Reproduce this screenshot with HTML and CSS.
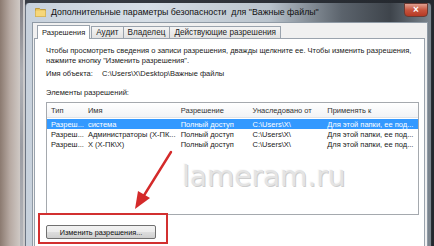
FILE: index.html
```html
<!DOCTYPE html>
<html>
<head>
<meta charset="utf-8">
<link rel="stylesheet" href="styles.css">
</head>
<body>
<div class="desk">
  <div class="bgwin"><div class="bgedge"></div></div>
  <div class="window">
    <div class="titlebar">
      <svg class="ficon" width="11" height="11" viewBox="0 0 11 11"><path d="M0.5 2.5h4l1 1h5v7h-10z" fill="#e8c25a" stroke="#b8902a" stroke-width="0.8"/><path d="M0.5 4.5h10v6h-10z" fill="#f6d77a"/></svg>
      <span class="title">Дополнительные параметры безопасности  для "Важные файлы"</span>
      <div class="close">×</div>
    </div>
    <div class="client">
      <div class="tabs">
        <div class="tab active">Разрешения</div>
        <div class="tab">Аудит</div>
        <div class="tab">Владелец</div>
        <div class="tab">Действующие разрешения</div>
      </div>
      <div class="panel">
        <p class="info">Чтобы просмотреть сведения о записи разрешения, дважды щелкните ее. Чтобы изменить разрешения,<br>нажмите кнопку "Изменить разрешения".</p>
        <div class="objrow"><span class="lbl">Имя объекта:</span><span>C:\Users\X\Desktop\Важные файлы</span></div>
        <div class="elems">Элементы разрешений:</div>
        <div class="list">
          <div class="row head"><span class="c1">Тип</span><span class="c2">Имя</span><span class="c3">Разрешение</span><span class="c4">Унаследовано от</span><span class="c5">Применять к</span></div>
          <div class="row sel"><span class="c1">Разреш...</span><span class="c2">система</span><span class="c3">Полный доступ</span><span class="c4">C:\Users\X\</span><span class="c5">Для этой папки, ее под...</span></div>
          <div class="row"><span class="c1">Разреш...</span><span class="c2">Администраторы (X-ПК...</span><span class="c3">Полный доступ</span><span class="c4">C:\Users\X\</span><span class="c5">Для этой папки, ее под...</span></div>
          <div class="row"><span class="c1">Разреш...</span><span class="c2">X (X-ПК\X)</span><span class="c3">Полный доступ</span><span class="c4">C:\Users\X\</span><span class="c5">Для этой папки, ее под...</span></div>
        </div>
        <div class="btnrow"><div class="btn">Изменить разрешения...</div></div>
      </div>
    </div>
  </div>
  <div class="watermark">lameram.ru</div>
  <div class="highlight"></div>
  <svg class="arrow" width="60" height="70" viewBox="0 0 60 70"><line x1="52" y1="5" x2="24" y2="50" stroke="#d42a2a" stroke-width="2.4" stroke-linecap="round"/><path d="M16 62 L19 44 L31 51 Z" fill="#d42a2a"/></svg>
</div>
</body>
</html>
```
FILE: styles.css
```css
html, body { margin: 0; padding: 0; }
body { font-family: "Liberation Sans", Arial, sans-serif; font-size: 7.5px; color: #1a1a1a; }
.desk { position: relative; width: 434px; height: 246px; overflow: hidden; display: flex;
  background: linear-gradient(90deg, #3a3f47, #23272d); }
.bgwin { width: 25px; flex: none; background: linear-gradient(90deg, #8b7a70 0%, #b7aaa3 40%, #cfc9c5 80%, #c9c9cb 100%); position: relative; }
.bgedge { position: absolute; left: 20px; top: 0; bottom: 0; width: 3px; background: linear-gradient(180deg, #7d7b80, #aeb0b5 30%, #9a9ca3 60%, #b5b6ba); }
.window { width: 405px; flex: none; margin-top: 3px; display: flex; flex-direction: column;
  background: linear-gradient(90deg, #c7d1dc 0%, #d6dee6 30%, #b9c3cc 60%, #5b636c 78%, #3e444b 90%, #7d8790 100%);
  border-left: 1px solid #6a7380; border-right: 1px solid #2a2e33; border-radius: 4px 4px 0 0; }
.titlebar { height: 19px; display: flex; align-items: center; padding-left: 9px; position: relative; }
.ficon { margin-right: 5px; margin-top: -2px; }
.title { font-family: "Liberation Sans", Arial, sans-serif; font-size: 8.8px; color: #111; white-space: pre; margin-top: -2px; }
.close { position: absolute; right: 3px; top: 0; width: 22px; height: 12px; border-radius: 0 0 4px 4px;
  background: linear-gradient(180deg, #e0a090 0%, #c8553e 50%, #b63a24 100%); color: #fff; font-size: 10px; font-weight: bold;
  display: flex; align-items: center; justify-content: center; border: 1px solid #6b3a32; line-height: 1; }
.client { flex: 1; margin: 0 3px 0 6px; background: #f0f0f0; border: 1px solid #8f9aa5; border-bottom: none;
  padding: 2px 2px 0 1px; display: flex; flex-direction: column; }
.tabs { display: flex; height: 13px; align-items: flex-end; padding-left: 3px; }
.tab { height: 11px; padding: 0 4px; border: 1px solid #9aa3ad; border-bottom: none; background: linear-gradient(#f4f4f4, #e2e2e2);
  display: flex; align-items: center; margin-right: -1px; font-size: 8.2px; color: #222; }
.tab.active { height: 13px; background: #fff; margin-right: 1px; position: relative; z-index: 1; margin-bottom: -1px; padding: 0 4px; font-size: 7.5px; }
.panel { flex: 1; background: #fff; border: 1px solid #9aa3ad; border-bottom: none; padding: 7px 0 0 11px; }
.info { margin: 0; line-height: 10px; color: #222; }
.objrow { margin-top: 3px; display: flex; color: #222; }
.lbl { width: 56px; }
.elems { margin-top: 10px; color: #222; }
.list { margin-top: 5px; width: 373px; height: 113px; border: 1px solid #a5a9ae; box-sizing: border-box; }
.row { display: flex; height: 10px; align-items: center; white-space: nowrap; color: #1a1a1a; }
.row.head { height: 14px; background: linear-gradient(#ffffff, #f2f3f5); border-bottom: 1px solid #e1e3e6; margin-bottom: 1px; color: #333; }
.row.sel { background: #3399ff; color: #fff; }
.row span { overflow: hidden; }
.c1 { width: 37px; padding-left: 4px; box-sizing: border-box; }
.c2 { width: 93px; padding-left: 4px; box-sizing: border-box; }
.c3 { width: 72px; padding-left: 4px; box-sizing: border-box; }
.c4 { width: 75px; padding-left: 4px; box-sizing: border-box; }
.c5 { width: 95px; padding-left: 4px; box-sizing: border-box; }
.btnrow { margin-top: 10px; }
.btn { width: 108px; height: 12px; border: 1px solid #707070; border-radius: 2px; background: linear-gradient(#f2f2f2 0%, #ebebeb 50%, #dddddd 51%, #cfcfcf 100%);
  display: flex; align-items: center; justify-content: center; font-size: 7.3px; color: #111; margin-left: 0px; }
.watermark { position: absolute; left: 182px; top: 160px; font-family: "DejaVu Sans", sans-serif; font-size: 28px;
  color: #e4e4e4; text-shadow: 1px 1px 0 #cdcdcd, -1px -1px 0 #fafafa; }
.highlight { position: absolute; left: 38px; top: 213px; width: 130px; height: 31px; border: 2px solid #d23030; box-sizing: border-box; }
.arrow { position: absolute; left: 119px; top: 147px; }
```
